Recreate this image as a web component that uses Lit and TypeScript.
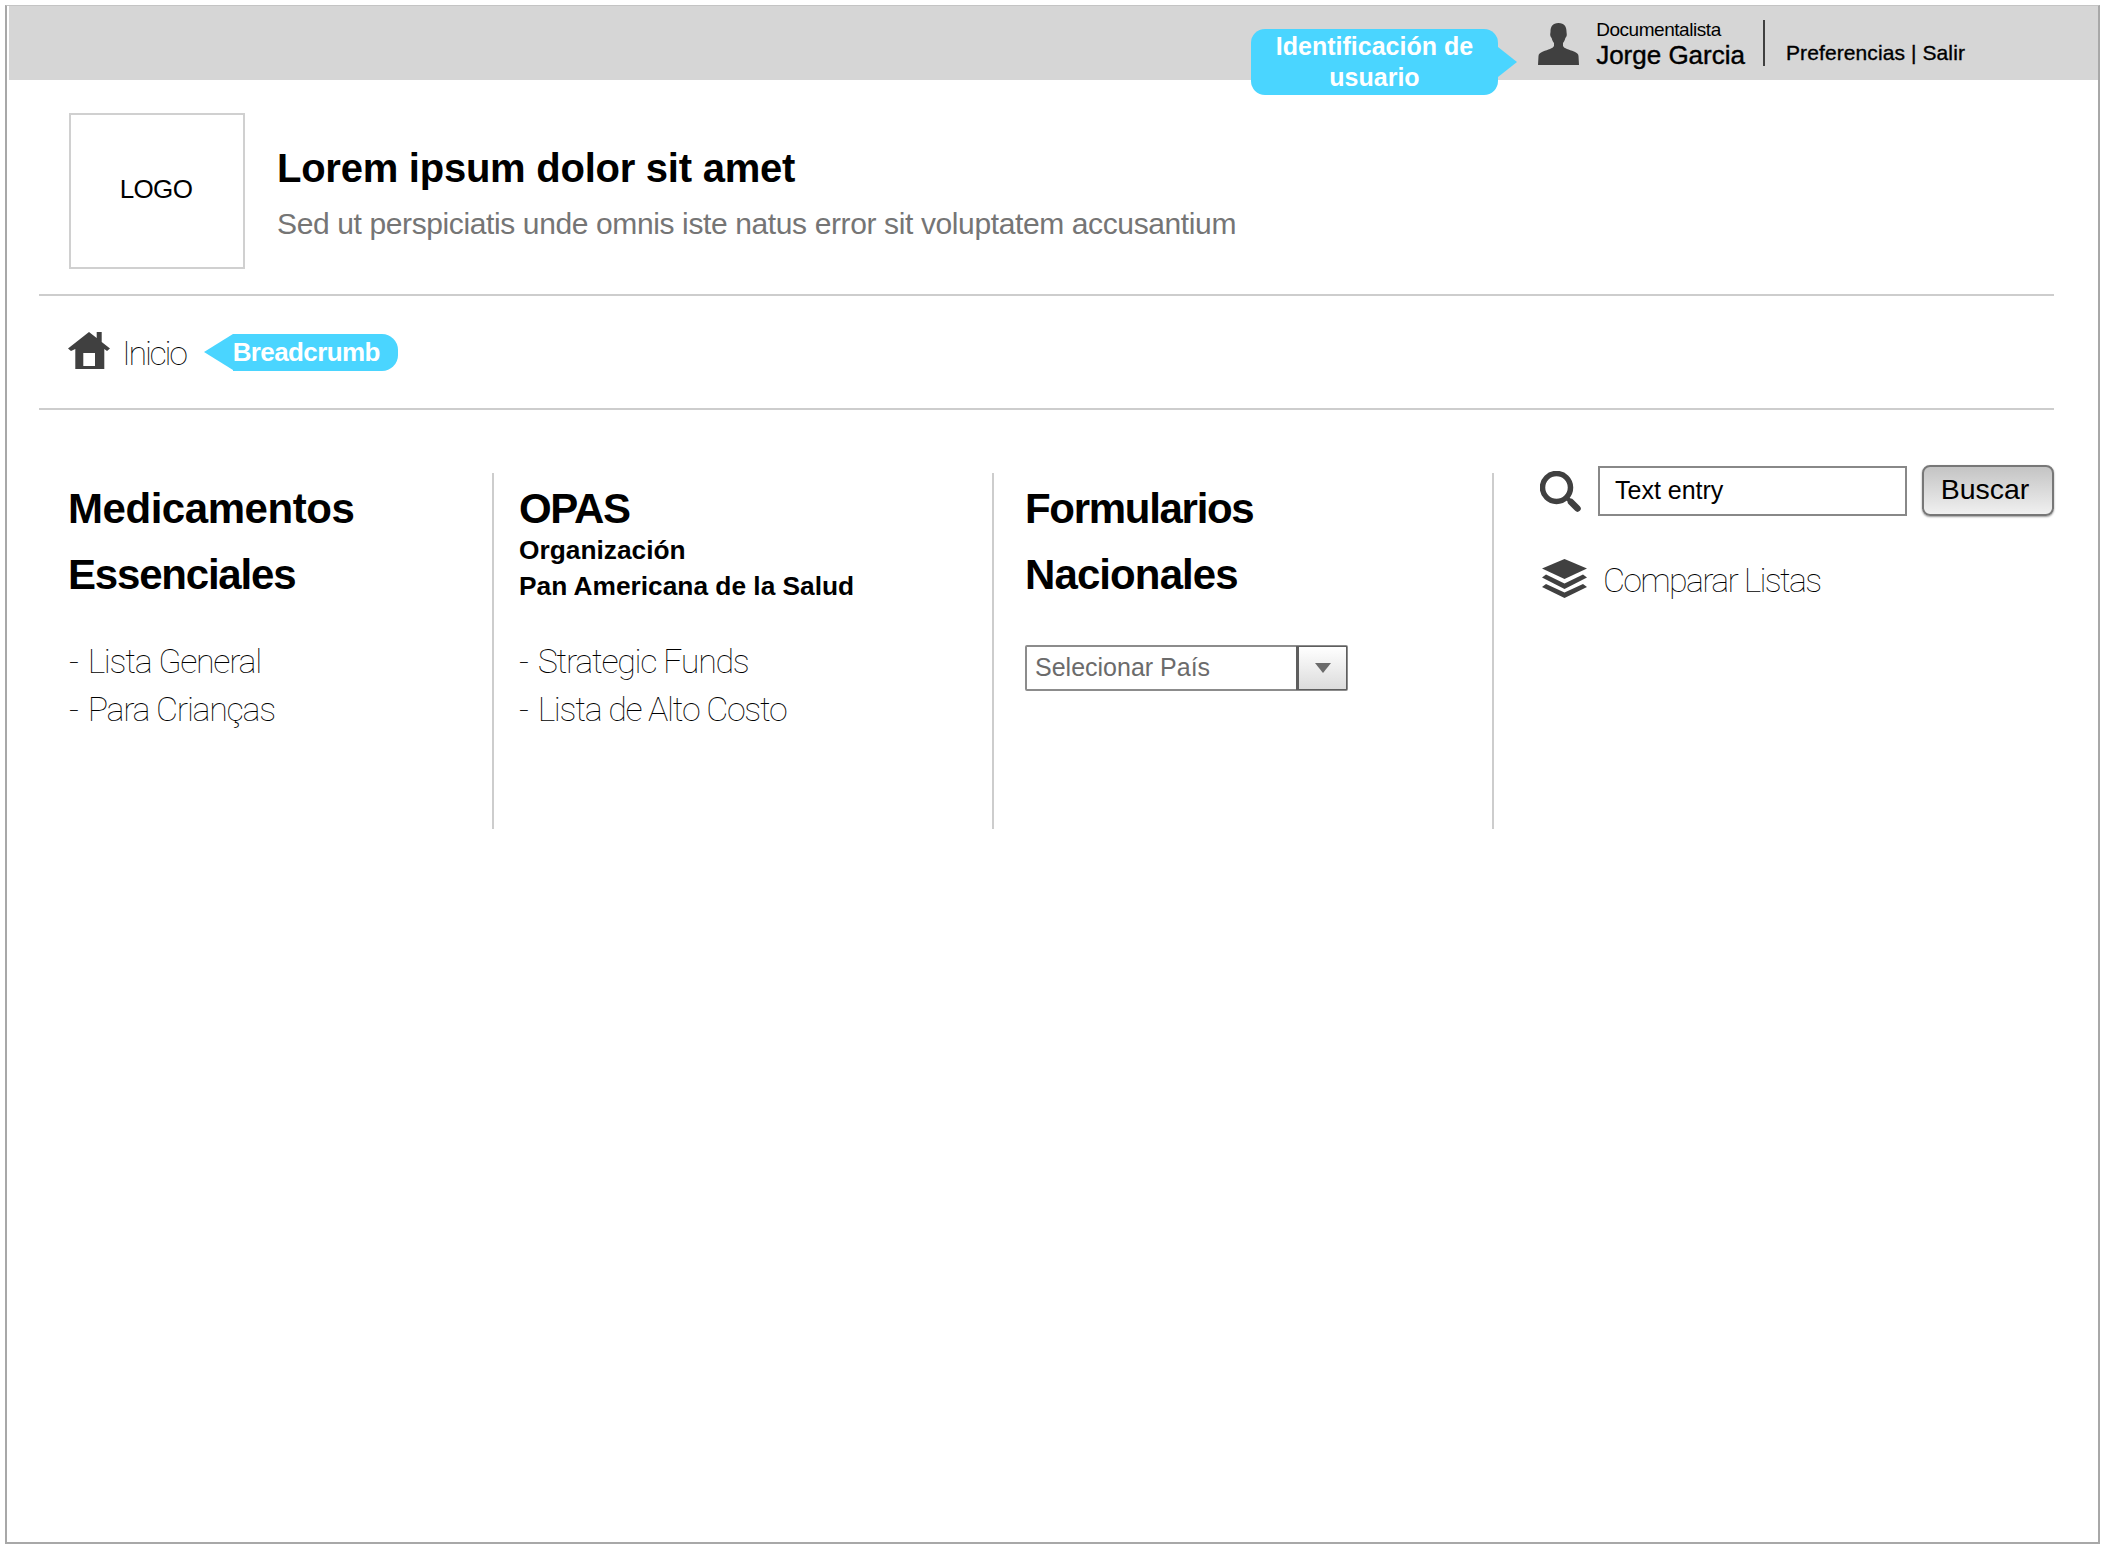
import { LitElement, css, html, svg } from 'lit'
import { customElement } from 'lit/decorators.js'

const personIcon = svg`<path d="M20.500 0C14.500 0 12.500 4 12.500 8.500 12.500 10 12 11 12.300 12.500 12.600 14 13.500 14.500 13.800 15.500 14.300 17.500 15.300 19 16 20V23C15 25.500 10 26.500 5 28.500 2 29.700.7 31 .5 33L0 42H41L40.500 33C40.300 31 39 29.700 36 28.500 31 26.500 26 25.500 25 23V20C25.700 19 26.700 17.500 27.200 15.500 27.500 14.500 28.400 14 28.700 12.500 29 11 28.500 10 28.500 8.500 28.500 4 26.500 0 20.500 0z" fill="#404040"/>`

const houseIcon = svg`<path d="M21 0 28.700 6V0H33.700V10L42 16.500 39 19 36.300 17V37H7.300V17L3 19 0 16.500zM15.300 21V34H27V21z" fill="#404040" fill-rule="evenodd"/>`

const searchIcon = svg`<circle cx="16.500" cy="16.500" r="14" fill="none" stroke="#404040" stroke-width="5.500"/><path d="M26 26 31 31" stroke="#404040" stroke-width="4"/><path d="M31 31 37.500 37.500" stroke="#404040" stroke-width="6.500" stroke-linecap="round"/>`

const layersIcon = svg`<path d="M22.500 0 45 9.500 22.500 20 0 9.500z" fill="#404040"/><path d="M4 15.500 22.500 24.500 41 15.500 45 18.500 22.500 30 0 18.500z" fill="#404040"/><path d="M4 25 22.500 33.500 41 25 45 28 22.500 39 0 28z" fill="#404040"/>`

const columns = [
  {
    title: [['Medicamentos', -0.45], ['Essenciales', -1.2]],
    links: ['Lista General', 'Para Crianças'],
  },
  {
    title: [['OPAS', -1.3]],
    sub: ['Organización', 'Pan Americana de la Salud'],
    links: ['Strategic Funds', 'Lista de Alto Costo'],
  },
  {
    title: [['Formularios', -1.3], ['Nacionales', -0.9]],
    select: 'Selecionar País',
  },
]

@customElement('app-root')
export class AppRoot extends LitElement {
  static styles = css`
    :host {
      display: block;
      width: 2104px;
      height: 1547px;
      font-family: 'Liberation Sans', Arial, sans-serif;
      color: #000;
      background: #fff;
    }
    .frame {
      position: relative;
      box-sizing: border-box;
      width: 2095px;
      height: 1539px;
      margin: 5px 0 0 5px;
      border: 2px solid #a8a8a8;
      border-top: 1px solid #c4c4c4;
    }
    .topbar {
      display: flex;
      justify-content: flex-end;
      align-items: center;
      height: 74px;
      margin-left: 2px;
      padding-right: 133px;
      background: #d6d6d6;
    }
    .callout {
      position: absolute;
      left: 1244px;
      top: 23px;
      display: flex;
      align-items: center;
      justify-content: center;
      width: 247px;
      height: 66px;
      border-radius: 14px;
      background: #4ad5ff;
      color: #fff;
      font-size: 25px;
      font-weight: 700;
      line-height: 31px;
      text-align: center;
    }
    .callout::after {
      content: '';
      position: absolute;
      left: 100%;
      top: 18px;
      border-left: 19px solid #4ad5ff;
      border-top: 15px solid transparent;
      border-bottom: 15px solid transparent;
    }
    .person {
      width: 41px;
      height: 42px;
      margin: 2px 17px 0 0;
    }
    .who {
      display: flex;
      flex-direction: column;
      height: 46px;
      padding-right: 18px;
      border-right: 2px solid #404040;
    }
    .role {
      font-size: 19px;
      line-height: 22px;
      letter-spacing: -0.45px;
      margin-top: -1px;
    }
    .name {
      font-size: 26px;
      line-height: 28px;
      letter-spacing: 0;
      -webkit-text-stroke: 0.4px #000;
    }
    .prefs {
      margin-left: 21px;
      font-size: 21px;
      margin-top: 19px;
      letter-spacing: 0.1px;
      -webkit-text-stroke: 0.35px #000;
    }
    main {
      margin-left: 32px;
      width: 2015px;
    }
    .brand {
      display: flex;
      align-items: center;
      gap: 32px;
      height: 156px;
      margin-top: 33px;
      padding-left: 30px;
    }
    .logo {
      box-sizing: border-box;
      display: flex;
      align-items: center;
      justify-content: center;
      width: 176px;
      height: 156px;
      padding: 0 2px 3px 0;
      border: 2px solid #d0d0d0;
      font-size: 26px;
      letter-spacing: -0.7px;
    }
    .brand-text {
      padding-top: 5px;
    }
    h1 {
      margin: 0;
      font-size: 40px;
      line-height: 44px;
      letter-spacing: -0.25px;
    }
    .tagline {
      margin-top: 16px;
      font-size: 30px;
      line-height: 36px;
      letter-spacing: -0.38px;
      color: #757575;
    }
    .crumbs {
      display: flex;
      align-items: center;
      height: 112px;
      margin-top: 25px;
      padding-left: 29px;
      border-top: 2px solid #cdcdcd;
      border-bottom: 2px solid #cdcdcd;
    }
    .crumbs svg {
      width: 42px;
      height: 37px;
      margin-top: -3px;
    }
    .inicio {
      margin-left: 12px;
      font-family: Roboto, sans-serif;
      font-weight: 100;
      font-size: 34px;
      color: #000;
      letter-spacing: -2.3px;
      margin-top: 2px;
    }
    .pill {
      position: relative;
      margin-left: 47px;
      padding: 0 18px 0 0;
      height: 37px;
      line-height: 36px;
      border-radius: 0 16px 16px 0;
      background: #4ad5ff;
      color: #fff;
      font-size: 26px;
      font-weight: 700;
      letter-spacing: -0.6px;
    }
    .pill::before {
      content: '';
      position: absolute;
      right: 100%;
      top: 0;
      border-right: 29px solid #4ad5ff;
      border-top: 18.500px solid transparent;
      border-bottom: 18.500px solid transparent;
    }
    .columns {
      display: grid;
      grid-template-columns: 455px 500px 500px 560px;
      height: 356px;
      margin-top: 63px;
    }
    .col {
      border-right: 2px solid #cdcdcd;
      padding-left: 30px;
    }
    .col:nth-child(2) { padding-left: 25px; }
    .col:nth-child(3) { padding-left: 31px; }
    .col:last-child {
      border-right: 0;
      padding-left: 46px;
    }
    h2 {
      margin: 0;
      padding-top: 3px;
      font-size: 42px;
      line-height: 66px;
    }
    h2 span {
      display: block;
    }
    .col:first-child h2 {
      margin-left: -1px;
    }
    .sub {
      font-size: 26.300px;
      line-height: 36px;
      font-weight: 700;
      margin-top: -10px;
    }
    .links {
      margin: 29px 0 0;
      padding: 0;
      list-style: none;
      font-family: Roboto, sans-serif;
      font-weight: 100;
      font-size: 34px;
      line-height: 48px;
      color: #000;
      letter-spacing: -1.3px;
    }
    .links i {
      font-style: normal;
      margin-right: 3px;
    }
    .sub + .links {
      margin-top: 33px;
    }
    .select {
      box-sizing: border-box;
      display: flex;
      width: 323px;
      height: 46px;
      margin-top: 37px;
      border: 2px solid #8c8c8c;
      border-radius: 2px;
      font-size: 25px;
      color: #6b6b6b;
    }
    .select span {
      flex: 1;
      padding-left: 8px;
      line-height: 40px;
    }
    .arrow {
      display: flex;
      align-items: center;
      justify-content: center;
      width: 47px;
      border-left: 2px solid #5e5e5e;
      outline: 1px solid #5e5e5e;
      background: linear-gradient(#fff, #dcdcdc);
    }
    .arrow::before {
      content: '';
      border-top: 10px solid #6b6b6b;
      border-left: 8px solid transparent;
      border-right: 8px solid transparent;
    }
    .search {
      display: flex;
      align-items: center;
      margin-top: -8px;
    }
    .search svg {
      width: 42px;
      height: 42px;
      margin-top: 2px;
    }
    .entry {
      box-sizing: border-box;
      width: 309px;
      height: 50px;
      margin-left: 16px;
      padding-left: 15px;
      border: 2px solid #888;
      font-size: 25px;
      line-height: 44px;
    }
    .buscar {
      box-sizing: border-box;
      width: 132px;
      height: 51px;
      margin-left: 15px;
      padding-right: 6px;
      border: 2px solid #777;
      border-radius: 8px;
      background: linear-gradient(#c4c4c4, #f0f0f0);
      box-shadow: 0 1px 2px rgba(0, 0, 0, 0.4);
      font-size: 28.500px;
      line-height: 44px;
      text-align: center;
    }
    .compare {
      display: flex;
      align-items: center;
      margin-top: 44px;
      font-family: Roboto, sans-serif;
      font-weight: 100;
      font-size: 34px;
      color: #000;
      letter-spacing: -1.7px;
    }
    .compare svg {
      width: 45px;
      height: 39px;
      margin: -3px 16px 0 2px;
    }
  `

  renderCol(col: (typeof columns)[number]) {
    return html`
      <section class="col">
        <h2>${col.title.map(([t, ls]) => html`<span style="letter-spacing:${ls}px">${t}</span>`)}</h2>
        ${col.sub ? html`<div class="sub">${col.sub.map((t) => html`${t}<br />`)}</div>` : ''}
        ${col.links ? html`<ul class="links">${col.links.map((l) => html`<li><i>-</i> ${l}</li>`)}</ul>` : ''}
        ${col.select ? html`<div class="select"><span>${col.select}</span><div class="arrow"></div></div>` : ''}
      </section>
    `
  }

  render() {
    return html`
      <div class="frame">
        <header class="topbar">
          <svg class="person" viewBox="0 0 41 42">${personIcon}</svg>
          <div class="who">
            <div class="role">Documentalista</div>
            <div class="name">Jorge Garcia</div>
          </div>
          <div class="prefs">Preferencias | Salir</div>
        </header>
        <div class="callout">Identificación de<br />usuario</div>
        <main>
          <div class="brand">
            <div class="logo">LOGO</div>
            <div class="brand-text">
              <h1>Lorem ipsum dolor sit amet</h1>
              <div class="tagline">Sed ut perspiciatis unde omnis iste natus error sit voluptatem accusantium</div>
            </div>
          </div>
          <nav class="crumbs">
            <svg viewBox="0 0 42 37">${houseIcon}</svg>
            <span class="inicio">Inicio</span>
            <span class="pill">Breadcrumb</span>
          </nav>
          <div class="columns">
            ${columns.map((c) => this.renderCol(c))}
            <section class="col">
              <div class="search">
                <svg viewBox="0 0 42 42">${searchIcon}</svg>
                <div class="entry">Text entry</div>
                <div class="buscar">Buscar</div>
              </div>
              <div class="compare">
                <svg viewBox="0 0 45 39">${layersIcon}</svg>
                Comparar Listas
              </div>
            </section>
          </div>
        </main>
      </div>
    `
  }
}
